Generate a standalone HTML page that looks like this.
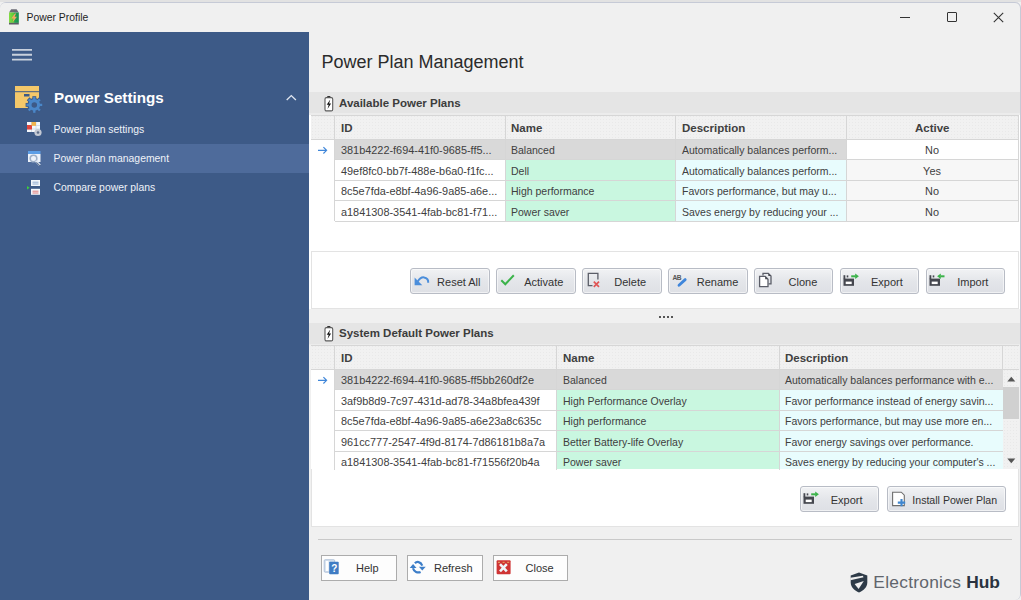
<!DOCTYPE html>
<html><head><meta charset="utf-8">
<style>
*{box-sizing:border-box;margin:0;padding:0}
html,body{width:1021px;height:600px;overflow:hidden;background:#f0f0f0;font-family:"Liberation Sans",sans-serif;color:#333}
.a{position:absolute}
.t{position:absolute;white-space:nowrap;line-height:1}
svg{position:absolute;overflow:visible}
.hdr{font-weight:bold;color:#404040}
.btn{position:absolute;height:26px;border:1px solid #b8bcc5;border-radius:3px;background:linear-gradient(#f1f2f4,#e4e6ea 50%,#dee0e5);box-shadow:inset 0 0 0 1px rgba(255,255,255,0.55)}
.btn2{position:absolute;height:26px;border:1px solid #acacac;background:#fdfdfd}
.bt{position:absolute;white-space:nowrap;line-height:1;font-size:11px;color:#333;top:7.3px}
.dots{background-color:#f1f1f1;background-image:radial-gradient(circle,#e9e9e9 0.6px,transparent 0.8px);background-size:3px 3px}
</style></head><body>

<div class="a" style="left:0;top:0;width:1021px;height:2px;background:#e2e2e2"></div>
<div class="a" style="left:0;top:2px;width:1021px;height:598px;background:#c6cad6;border-radius:6px 6px 6px 0"></div>
<div class="a" style="left:0;top:3px;width:1020px;height:597px;background:#f0f0f0;border-radius:5px 5px 5px 0"></div>
<svg style="left:9.3px;top:9.2px" width="11" height="16" viewBox="0 0 11 16">
<defs><linearGradient id="bg1" x1="0" x2="1"><stop offset="0" stop-color="#86dc44"/><stop offset="0.45" stop-color="#5ccc3a"/><stop offset="0.6" stop-color="#21a152"/><stop offset="1" stop-color="#178f4e"/></linearGradient></defs>
<path d="M2.2 0.2h5.4l2.2 3.4H0z" fill="#6b6b74"/>
<rect x="0" y="3.5" width="9.8" height="10.4" fill="url(#bg1)"/>
<rect x="0" y="13.8" width="9.8" height="1.7" fill="#5d5e66"/>
<path d="M5.9 4.4 L2.3 9.5 L4.6 9.5 L3.6 13.2 L8 7.8 L5.6 7.8 L7.1 4.4z" fill="#f4a862"/>
</svg>
<div class="t" style="left:26.5px;top:12.5px;font-size:10.4px;color:#1e1e1e">Power Profile</div>
<div class="a" style="left:899.5px;top:16.8px;width:10.5px;height:1px;background:#333"></div>
<div class="a" style="left:946.5px;top:12px;width:10px;height:10px;border:1px solid #333;border-radius:1px"></div>
<svg style="left:993px;top:12px" width="11" height="11"><path d="M0.8 0.8L10.2 10.2M10.2 0.8L0.8 10.2" stroke="#333" stroke-width="1.1"/></svg>
<div class="a" style="left:0;top:31.5px;width:309px;height:568.5px;background:#3d5a87"></div>
<div class="a" style="left:0;top:144px;width:309px;height:29px;background:#4e6b9b"></div>
<svg style="left:0;top:0" width="40" height="70"><path d="M12 49.9H32M12 54.75H32M12 59.6H32" stroke="#c9d1dd" stroke-width="1.8"/></svg>
<svg style="left:15px;top:86px" width="30" height="28" viewBox="0 0 30 28">
<rect x="0" y="0" width="24" height="5.2" fill="#f4c86a"/>
<rect x="0" y="6.2" width="24" height="15.8" fill="#f4c86a"/>
<rect x="9" y="8" width="5.5" height="2.5" fill="#3d5a87"/>
<g transform="translate(19.3,18.9)">
<circle r="7" fill="#3d5a87"/>
<g fill="#3d5a87" stroke="#3d5a87" stroke-width="1.6"><rect x="-1.15" y="-7.9" width="2.3" height="3.2" transform="rotate(0)"/><rect x="-1.15" y="-7.9" width="2.3" height="3.2" transform="rotate(45)"/><rect x="-1.15" y="-7.9" width="2.3" height="3.2" transform="rotate(90)"/><rect x="-1.15" y="-7.9" width="2.3" height="3.2" transform="rotate(135)"/><rect x="-1.15" y="-7.9" width="2.3" height="3.2" transform="rotate(180)"/><rect x="-1.15" y="-7.9" width="2.3" height="3.2" transform="rotate(225)"/><rect x="-1.15" y="-7.9" width="2.3" height="3.2" transform="rotate(270)"/><rect x="-1.15" y="-7.9" width="2.3" height="3.2" transform="rotate(315)"/></g>
<g fill="#4a87c9"><rect x="-1.15" y="-7.9" width="2.3" height="3.2" transform="rotate(0)"/><rect x="-1.15" y="-7.9" width="2.3" height="3.2" transform="rotate(45)"/><rect x="-1.15" y="-7.9" width="2.3" height="3.2" transform="rotate(90)"/><rect x="-1.15" y="-7.9" width="2.3" height="3.2" transform="rotate(135)"/><rect x="-1.15" y="-7.9" width="2.3" height="3.2" transform="rotate(180)"/><rect x="-1.15" y="-7.9" width="2.3" height="3.2" transform="rotate(225)"/><rect x="-1.15" y="-7.9" width="2.3" height="3.2" transform="rotate(270)"/><rect x="-1.15" y="-7.9" width="2.3" height="3.2" transform="rotate(315)"/></g>
<circle r="4.3" fill="none" stroke="#4a87c9" stroke-width="3.1"/>
</g></svg>
<div class="t" style="left:54px;top:89.5px;font-size:15.2px;font-weight:bold;color:#fff">Power Settings</div>
<svg style="left:286px;top:95px" width="11" height="6"><path d="M0.7 4.9L5.3 0.6L9.9 4.9" fill="none" stroke="#dfe5ef" stroke-width="1.4"/></svg>
<svg style="left:26px;top:121px" width="16" height="16" viewBox="0 0 16 16">
<rect x="1" y="1" width="13" height="10" fill="#f4f7fb"/>
<path d="M1 4.5h13M1 8h13M5.5 1v10M10 1v10" stroke="#c9d3e0" stroke-width="0.7"/>
<rect x="1" y="4" width="5" height="4.5" fill="#e0473f"/>
<rect x="5.5" y="1" width="4.5" height="3.8" fill="#f2b34c"/>
<circle cx="12" cy="11.5" r="3.6" fill="#c3c9d4"/><circle cx="12" cy="11.5" r="1.3" fill="#5b6c88"/>
</svg>
<svg style="left:27px;top:150px" width="16" height="18" viewBox="0 0 16 18">
<rect x="1" y="1" width="12.5" height="3" fill="#5d9ee6"/>
<rect x="1" y="4" width="12.5" height="8" fill="#eef3fa"/>
<circle cx="6.5" cy="8.5" r="3.3" fill="none" stroke="#9fb0c8" stroke-width="1.6"/>
<path d="M8.8 11L13 15.3" stroke="#dfe8f5" stroke-width="2.2"/>
<path d="M9.5 12.3L13.2 16" stroke="#2f4260" stroke-width="0.8"/>
</svg>
<svg style="left:26px;top:179px" width="16" height="17" viewBox="0 0 16 17">
<rect x="5" y="1" width="9" height="6" fill="#f2f6fb"/>
<path d="M6.5 3.2h6M6.5 5h6" stroke="#7a9cc8" stroke-width="0.8"/>
<rect x="5" y="9.8" width="9" height="6" fill="#f2f6fb"/>
<path d="M6.5 12.2h6M6.5 14h6" stroke="#e0605a" stroke-width="0.8"/>
<path d="M1 7l2.6 1.8L1 10.5z" fill="#3ccf3c"/>
</svg>
<div class="t" style="left:53.5px;top:125px;font-size:10.4px;color:#eef2f8">Power plan settings</div>
<div class="t" style="left:53.5px;top:154px;font-size:10.4px;color:#eef2f8">Power plan management</div>
<div class="t" style="left:53.5px;top:183px;font-size:10.4px;color:#eef2f8">Compare power plans</div>
<div class="t" style="left:321.5px;top:52.5px;font-size:18px;color:#2b2b2b">Power Plan Management</div>
<svg style="left:323.5px;top:94.5px" width="11" height="17" viewBox="0 0 11 17">
<rect x="3.1" y="0.9" width="3.4" height="2" rx="0.8" fill="#333"/>
<rect x="1" y="2.6" width="7.7" height="13.3" rx="1.4" fill="#fff" stroke="#5a5a5a" stroke-width="1.1"/>
<path d="M6.3 4.4 L2.7 9.7 H4.7 L3.5 13.9 L7.1 8.4 H5.1z" fill="#111"/>
</svg>
<div class="a" style="left:309px;top:92px;width:711px;height:21px;background:#e5e5e5"></div>
<div class="a" style="left:309px;top:113px;width:711px;height:2px;background:#ececec"></div>
<svg style="left:323.5px;top:94.5px" width="11" height="17" viewBox="0 0 11 17">
<rect x="3.1" y="0.9" width="3.4" height="2" rx="0.8" fill="#333"/>
<rect x="1" y="2.6" width="7.7" height="13.3" rx="1.4" fill="#fff" stroke="#5a5a5a" stroke-width="1.1"/>
<path d="M6.3 4.4 L2.7 9.7 H4.7 L3.5 13.9 L7.1 8.4 H5.1z" fill="#111"/>
</svg>
<div class="t" style="left:339px;top:98.3px;font-size:11.5px;font-weight:bold;color:#3c3c3c">Available Power Plans</div>
<div class="a" style="left:309px;top:115px;width:711px;height:194px;background:#fff"></div>
<div class="a dots" style="left:311px;top:115px;width:708px;height:24.3px"></div>
<div class="a" style="left:335px;top:139.3px;width:511.5px;height:20.5px;background:#d9d9d9"></div>
<div class="a" style="left:505px;top:159.8px;width:171px;height:20.599999999999994px;background:#c9f7e0"></div>
<div class="a" style="left:676px;top:159.8px;width:170.5px;height:20.599999999999994px;background:#e8fcfd"></div>
<div class="a" style="left:846.5px;top:159.8px;width:172.5px;height:20.599999999999994px;background:#f7f7f7"></div>
<div class="a" style="left:505px;top:180.4px;width:171px;height:20.5px;background:#c9f7e0"></div>
<div class="a" style="left:676px;top:180.4px;width:170.5px;height:20.5px;background:#e8fcfd"></div>
<div class="a" style="left:846.5px;top:180.4px;width:172.5px;height:20.5px;background:#f7f7f7"></div>
<div class="a" style="left:505px;top:200.9px;width:171px;height:20.5px;background:#c9f7e0"></div>
<div class="a" style="left:676px;top:200.9px;width:170.5px;height:20.5px;background:#e8fcfd"></div>
<div class="a" style="left:846.5px;top:200.9px;width:172.5px;height:20.5px;background:#f7f7f7"></div>
<div class="a" style="left:311px;top:114.5px;width:708px;height:1px;background:#d6d6d6"></div>
<div class="a" style="left:311px;top:138.8px;width:708px;height:1px;background:#d6d6d6"></div>
<div class="a" style="left:335px;top:159.3px;width:684px;height:1px;background:#d6d6d6"></div>
<div class="a" style="left:335px;top:179.9px;width:684px;height:1px;background:#d6d6d6"></div>
<div class="a" style="left:335px;top:200.4px;width:684px;height:1px;background:#d6d6d6"></div>
<div class="a" style="left:335px;top:220.9px;width:684px;height:1px;background:#d6d6d6"></div>
<div class="a" style="left:334px;top:115px;width:1px;height:106.4px;background:#d6d6d6"></div>
<div class="a" style="left:505px;top:115px;width:1px;height:106.4px;background:#d6d6d6"></div>
<div class="a" style="left:675px;top:115px;width:1px;height:106.4px;background:#d6d6d6"></div>
<div class="a" style="left:846px;top:115px;width:1px;height:106.4px;background:#d6d6d6"></div>
<div class="a" style="left:1018px;top:115px;width:1px;height:106.4px;background:#d6d6d6"></div>
<div class="t hdr" style="left:341px;top:122.5px;font-size:11.5px">ID</div>
<div class="t hdr" style="left:511px;top:122.5px;font-size:11.5px">Name</div>
<div class="t hdr" style="left:682px;top:122.5px;font-size:11.5px">Description</div>
<div class="t hdr" style="left:915px;top:122.5px;font-size:11.5px">Active</div>
<div class="t" style="left:341px;top:145.3px;font-size:10.9px;color:#404040">381b4222-f694-41f0-9685-ff5...</div>
<div class="t" style="left:511px;top:145.3px;font-size:10.5px;color:#404040">Balanced</div>
<div class="t" style="left:682px;top:145.3px;font-size:10.5px;color:#404040">Automatically balances perform...</div>
<div class="t" style="left:932px;top:145.3px;font-size:10.9px;color:#404040;transform:translateX(-50%)">No</div>
<div class="t" style="left:341px;top:165.8px;font-size:10.9px;color:#404040">49ef8fc0-bb7f-488e-b6a0-f1fc...</div>
<div class="t" style="left:511px;top:165.8px;font-size:10.5px;color:#404040">Dell</div>
<div class="t" style="left:682px;top:165.8px;font-size:10.5px;color:#404040">Automatically balances perform...</div>
<div class="t" style="left:932px;top:165.8px;font-size:10.9px;color:#404040;transform:translateX(-50%)">Yes</div>
<div class="t" style="left:341px;top:186.4px;font-size:10.9px;color:#404040">8c5e7fda-e8bf-4a96-9a85-a6e...</div>
<div class="t" style="left:511px;top:186.4px;font-size:10.5px;color:#404040">High performance</div>
<div class="t" style="left:682px;top:186.4px;font-size:10.5px;color:#404040">Favors performance, but may u...</div>
<div class="t" style="left:932px;top:186.4px;font-size:10.9px;color:#404040;transform:translateX(-50%)">No</div>
<div class="t" style="left:341px;top:206.9px;font-size:10.9px;color:#404040">a1841308-3541-4fab-bc81-f71...</div>
<div class="t" style="left:511px;top:206.9px;font-size:10.5px;color:#404040">Power saver</div>
<div class="t" style="left:682px;top:206.9px;font-size:10.5px;color:#404040">Saves energy by reducing your ...</div>
<div class="t" style="left:932px;top:206.9px;font-size:10.9px;color:#404040;transform:translateX(-50%)">No</div>
<svg style="left:317.6px;top:146px" width="10" height="8"><path d="M0 4.3H8.6M5.4 1.1L8.6 4.3L5.4 7.5" fill="none" stroke="#3f86d9" stroke-width="1.15"/></svg>
<div class="a" style="left:311px;top:250.5px;width:708px;height:58.5px;border:1px solid #e3e3e3"></div>
<div class="btn" style="left:410.3px;top:268.3px;width:79.5px"><svg style="left:0;top:0" width="24" height="24" viewBox="0 0 24 24"><path d="M6.8 12.6C8.5 9.5 11 8.2 13 8.4C15.8 8.7 17.4 10.8 17.2 13.8" fill="none" stroke="#4b8edb" stroke-width="2"/><path d="M3.6 8.6V16.3H11.3z" fill="#4b8edb"/></svg><span class="bt" style="left:25.8px">Reset All</span></div>
<div class="btn" style="left:496.20000000000005px;top:268.3px;width:79.5px"><svg style="left:0;top:0" width="24" height="24" viewBox="0 0 24 24"><path d="M4.3 11.3L8.3 15.3L16.8 6.2" fill="none" stroke="#3bb34a" stroke-width="2"/></svg><span class="bt" style="left:27.0px">Activate</span></div>
<div class="btn" style="left:582.1px;top:268.3px;width:79.5px"><svg style="left:0;top:0" width="24" height="24" viewBox="0 0 24 24"><path d="M14.9 10.6V4.4H5.3V16.7H9.5" fill="none" stroke="#5b5e68" stroke-width="1.3"/><path d="M10.8 12.6L16 17.8M16 12.6L10.8 17.8" stroke="#e05555" stroke-width="1.7"/></svg><span class="bt" style="left:31.2px">Delete</span></div>
<div class="btn" style="left:668.0px;top:268.3px;width:79.5px"><svg style="left:0;top:0" width="24" height="24" viewBox="0 0 24 24"><text x="3.4" y="11.4" font-family="Liberation Sans" font-weight="bold" font-size="6.6" fill="#555" letter-spacing="-0.3">AB</text><path d="M10 16.3L16.2 10.6" stroke="#3f86db" stroke-width="2.8" stroke-linecap="round"/></svg><span class="bt" style="left:27.8px">Rename</span></div>
<div class="btn" style="left:753.9000000000001px;top:268.3px;width:79.5px"><svg style="left:0;top:0" width="24" height="24" viewBox="0 0 24 24"><path d="M8 6.5V4.4h5.3l2.7 2.7v7.7h-2.5" fill="none" stroke="#5b5e68" stroke-width="1.3"/><path d="M13.3 4.4v2.7H16z" fill="#45474f"/><path d="M4.6 7.4h5.6l2.8 2.8v7.5H4.6z" fill="#fff" stroke="#5b5e68" stroke-width="1.3"/><path d="M10.2 7.4v2.8h2.8z" fill="#45474f"/></svg><span class="bt" style="left:33.7px">Clone</span></div>
<div class="btn" style="left:839.8px;top:268.3px;width:79.5px"><svg style="left:0;top:0" width="24" height="24" viewBox="0 0 24 24"><rect x="2.5" y="9.6" width="10.5" height="7.2" fill="#45474f"/><rect x="4.7" y="12.6" width="6" height="2.5" fill="#fff"/><rect x="2.5" y="6.2" width="1.8" height="4" fill="#45474f"/><rect x="5.7" y="6.4" width="1.6" height="2" fill="#45474f"/><path d="M10.2 7.3h4.5" stroke="#3bb34a" stroke-width="2"/><path d="M14.2 4.6L17.9 7.3L14.2 10z" fill="#3bb34a"/></svg><span class="bt" style="left:30.2px">Export</span></div>
<div class="btn" style="left:925.7px;top:268.3px;width:79.5px"><svg style="left:0;top:0" width="24" height="24" viewBox="0 0 24 24"><rect x="2.5" y="9.6" width="10.5" height="7.2" fill="#45474f"/><rect x="4.7" y="12.6" width="6" height="2.5" fill="#fff"/><rect x="2.5" y="6.2" width="1.8" height="4" fill="#45474f"/><rect x="5.7" y="6.4" width="1.6" height="2" fill="#45474f"/><path d="M13.5 7.3h4" stroke="#3bb34a" stroke-width="2"/><path d="M13.8 4.6L10.1 7.3L13.8 10z" fill="#3bb34a"/></svg><span class="bt" style="left:30.5px">Import</span></div>
<div class="a" style="left:658.5px;top:315.5px;width:2px;height:2px;background:#555"></div>
<div class="a" style="left:662.5px;top:315.5px;width:2px;height:2px;background:#555"></div>
<div class="a" style="left:666.5px;top:315.5px;width:2px;height:2px;background:#555"></div>
<div class="a" style="left:670.5px;top:315.5px;width:2px;height:2px;background:#555"></div>
<div class="a" style="left:309px;top:322.5px;width:711px;height:21.5px;background:#e5e5e5"></div>
<div class="a" style="left:309px;top:344px;width:711px;height:1px;background:#ececec"></div>
<svg style="left:323.5px;top:324.5px" width="11" height="17" viewBox="0 0 11 17">
<rect x="3.1" y="0.9" width="3.4" height="2" rx="0.8" fill="#333"/>
<rect x="1" y="2.6" width="7.7" height="13.3" rx="1.4" fill="#fff" stroke="#5a5a5a" stroke-width="1.1"/>
<path d="M6.3 4.4 L2.7 9.7 H4.7 L3.5 13.9 L7.1 8.4 H5.1z" fill="#111"/>
</svg>
<div class="t" style="left:339px;top:328.3px;font-size:11.5px;font-weight:bold;color:#3c3c3c">System Default Power Plans</div>
<div class="a" style="left:311px;top:345px;width:708px;height:181.5px;background:#fff;border:1px solid #e3e3e3;border-top:none"></div>
<div class="a dots" style="left:311px;top:345px;width:708px;height:24.3px"></div>
<div class="a" style="left:311px;top:369.3px;width:708px;height:100.2px;background:#fff;overflow:hidden">
<div class="a" style="left:24px;top:0.0px;width:667.5px;height:20.5px;background:#d9d9d9"></div>
<div class="t" style="left:30px;top:6.0px;font-size:10.9px;color:#404040">381b4222-f694-41f0-9685-ff5bb260df2e</div>
<div class="t" style="left:252px;top:6.0px;font-size:10.5px;color:#404040">Balanced</div>
<div class="t" style="left:474px;top:6.0px;font-size:10.5px;color:#404040">Automatically balances performance with e...</div>
<div class="a" style="left:246px;top:20.5px;width:222px;height:20.5px;background:#c9f7e0"></div>
<div class="a" style="left:468px;top:20.5px;width:223.5px;height:20.5px;background:#e8fcfd"></div>
<div class="t" style="left:30px;top:26.5px;font-size:10.9px;color:#404040">3af9b8d9-7c97-431d-ad78-34a8bfea439f</div>
<div class="t" style="left:252px;top:26.5px;font-size:10.5px;color:#404040">High Performance Overlay</div>
<div class="t" style="left:474px;top:26.5px;font-size:10.5px;color:#404040">Favor performance instead of energy savin...</div>
<div class="a" style="left:246px;top:41.099999999999966px;width:222px;height:20.5px;background:#c9f7e0"></div>
<div class="a" style="left:468px;top:41.099999999999966px;width:223.5px;height:20.5px;background:#e8fcfd"></div>
<div class="t" style="left:30px;top:47.099999999999966px;font-size:10.9px;color:#404040">8c5e7fda-e8bf-4a96-9a85-a6e23a8c635c</div>
<div class="t" style="left:252px;top:47.099999999999966px;font-size:10.5px;color:#404040">High performance</div>
<div class="t" style="left:474px;top:47.099999999999966px;font-size:10.5px;color:#404040">Favors performance, but may use more en...</div>
<div class="a" style="left:246px;top:61.599999999999966px;width:222px;height:20.5px;background:#c9f7e0"></div>
<div class="a" style="left:468px;top:61.599999999999966px;width:223.5px;height:20.5px;background:#e8fcfd"></div>
<div class="t" style="left:30px;top:67.59999999999997px;font-size:10.9px;color:#404040">961cc777-2547-4f9d-8174-7d86181b8a7a</div>
<div class="t" style="left:252px;top:67.59999999999997px;font-size:10.5px;color:#404040">Better Battery-life Overlay</div>
<div class="t" style="left:474px;top:67.59999999999997px;font-size:10.5px;color:#404040">Favor energy savings over performance.</div>
<div class="a" style="left:246px;top:82.09999999999997px;width:222px;height:18.100000000000023px;background:#c9f7e0"></div>
<div class="a" style="left:468px;top:82.09999999999997px;width:223.5px;height:18.100000000000023px;background:#e8fcfd"></div>
<div class="t" style="left:30px;top:88.09999999999997px;font-size:10.9px;color:#404040">a1841308-3541-4fab-bc81-f71556f20b4a</div>
<div class="t" style="left:252px;top:88.09999999999997px;font-size:10.5px;color:#404040">Power saver</div>
<div class="t" style="left:474px;top:88.09999999999997px;font-size:10.5px;color:#404040">Saves energy by reducing your computer's ...</div>
</div>
<div class="a dots" style="left:1002.5px;top:369.3px;width:16.5px;height:100.2px"></div>
<div class="a" style="left:1003px;top:387px;width:16px;height:32px;background:#d0d0d0"></div>
<svg style="left:1006.5px;top:376px" width="9" height="6"><path d="M0.3 5.5 L4.3 0.8 L8.3 5.5Z" fill="#555"/></svg>
<svg style="left:1006.5px;top:457.5px" width="9" height="6"><path d="M0.3 0.5 L4.3 5.2 L8.3 0.5Z" fill="#555"/></svg>
<div class="a" style="left:311px;top:344.5px;width:708px;height:1px;background:#d6d6d6"></div>
<div class="a" style="left:311px;top:368.8px;width:708px;height:1px;background:#d6d6d6"></div>
<div class="a" style="left:335px;top:389.3px;width:667.5px;height:1px;background:#d6d6d6"></div>
<div class="a" style="left:335px;top:409.9px;width:667.5px;height:1px;background:#d6d6d6"></div>
<div class="a" style="left:335px;top:430.4px;width:667.5px;height:1px;background:#d6d6d6"></div>
<div class="a" style="left:335px;top:450.9px;width:667.5px;height:1px;background:#d6d6d6"></div>
<div class="a" style="left:1002px;top:345px;width:1px;height:24.3px;background:#d6d6d6"></div>
<div class="a" style="left:334px;top:345px;width:1px;height:124.5px;background:#d6d6d6"></div>
<div class="a" style="left:556px;top:345px;width:1px;height:124.5px;background:#d6d6d6"></div>
<div class="a" style="left:779px;top:345px;width:1px;height:124.5px;background:#d6d6d6"></div>
<div class="t hdr" style="left:341px;top:352.5px;font-size:11.5px">ID</div>
<div class="t hdr" style="left:563px;top:352.5px;font-size:11.5px">Name</div>
<div class="t hdr" style="left:785px;top:352.5px;font-size:11.5px">Description</div>
<svg style="left:317.6px;top:376px" width="10" height="8"><path d="M0 4.3H8.6M5.4 1.1L8.6 4.3L5.4 7.5" fill="none" stroke="#3f86d9" stroke-width="1.15"/></svg>
<div class="btn" style="left:799.5px;top:486.3px;width:79.5px"><svg style="left:0;top:0" width="24" height="24" viewBox="0 0 24 24"><rect x="2.5" y="9.6" width="10.5" height="7.2" fill="#45474f"/><rect x="4.7" y="12.6" width="6" height="2.5" fill="#fff"/><rect x="2.5" y="6.2" width="1.8" height="4" fill="#45474f"/><rect x="5.7" y="6.4" width="1.6" height="2" fill="#45474f"/><path d="M10.2 7.3h4.5" stroke="#3bb34a" stroke-width="2"/><path d="M14.2 4.6L17.9 7.3L14.2 10z" fill="#3bb34a"/></svg><span class="bt" style="left:30.2px">Export</span></div>
<div class="btn" style="left:886.5px;top:486.3px;width:119.5px"><svg style="left:0;top:0" width="24" height="24" viewBox="0 0 24 24"><path d="M4.6 5.2H13.3L16.3 8.2V18.6H4.6z" fill="#fff" stroke="#6e6e6e" stroke-width="1.1"/><path d="M13.5 12V19.3M9.8 15.6H17.2" stroke="#3f86cf" stroke-width="2.1"/></svg><span class="bt" style="left:24.8px;font-size:10.6px">Install Power Plan</span></div>
<div class="a" style="left:318px;top:539px;width:694px;height:1px;background:#c9c9c9"></div>
<div class="btn2" style="left:321.3px;top:554.8px;width:75.5px"><svg style="left:0;top:0" width="24" height="24" viewBox="0 0 24 24"><rect x="2.2" y="3.7" width="10.5" height="12.5" rx="1" fill="#d4e0ee" stroke="#a6b9d3" stroke-width="0.8"/><rect x="3.8" y="5" width="2.6" height="10" fill="#fff"/><rect x="7.2" y="5.7" width="9.5" height="12.5" rx="0.8" fill="#3f7cc4"/><text x="9.3" y="16.2" font-family="Liberation Sans" font-weight="bold" font-size="10" fill="#fff">?</text></svg><span class="bt" style="left:33.7px">Help</span></div>
<div class="btn2" style="left:407.3px;top:554.8px;width:75.5px"><svg style="left:0;top:0" width="24" height="24" viewBox="0 0 24 24"><path d="M6.9 7.3C8.8 5.2 12.5 5.3 14.3 9.6" fill="none" stroke="#3d7ec8" stroke-width="2.2"/><path d="M5 12.3C5.9 15.7 9.6 17.3 12.6 16" fill="none" stroke="#3d7ec8" stroke-width="2.2"/><path d="M10.9 10.8H17.7L14.3 14.6z" fill="#3d7ec8"/><path d="M1.7 11.9H8.5L5.1 8z" fill="#3d7ec8"/></svg><span class="bt" style="left:25.7px">Refresh</span></div>
<div class="btn2" style="left:493.4px;top:554.8px;width:75px"><svg style="left:0;top:0" width="24" height="24" viewBox="0 0 24 24"><rect x="2.6" y="4.2" width="14" height="14" rx="1" fill="#cf3434"/><path d="M6 8.2L12.8 15.4M12.8 8.2L6 15.4" stroke="#eef6fa" stroke-width="2.6"/><path d="M4 6.3h2M8.6 6.3h2M13.2 6.3h2" stroke="#f0d070" stroke-width="0.8"/></svg><span class="bt" style="left:31.2px">Close</span></div>
<svg style="left:850px;top:572px" width="18" height="21" viewBox="0 0 18 21">
<path d="M9 0.5L17.3 3.6V10.5C17.3 15 13.5 18.6 9 20.5C4.5 18.6 0.7 15 0.7 10.5V3.6z" fill="#2e3b48"/>
<path d="M0.4 5.7L12.8 3.7L13.6 5.3L0.4 8.3z" fill="#f0f0f0"/>
<path d="M4.6 12.1L13.8 9L8.6 17.1z" fill="#f0f0f0"/>
</svg>
<div class="t" style="left:873.3px;top:574.3px;font-size:17.4px;color:#60656c;letter-spacing:0.25px">Electronics <b style="color:#2a3340;letter-spacing:0">Hub</b></div>
</body></html>
